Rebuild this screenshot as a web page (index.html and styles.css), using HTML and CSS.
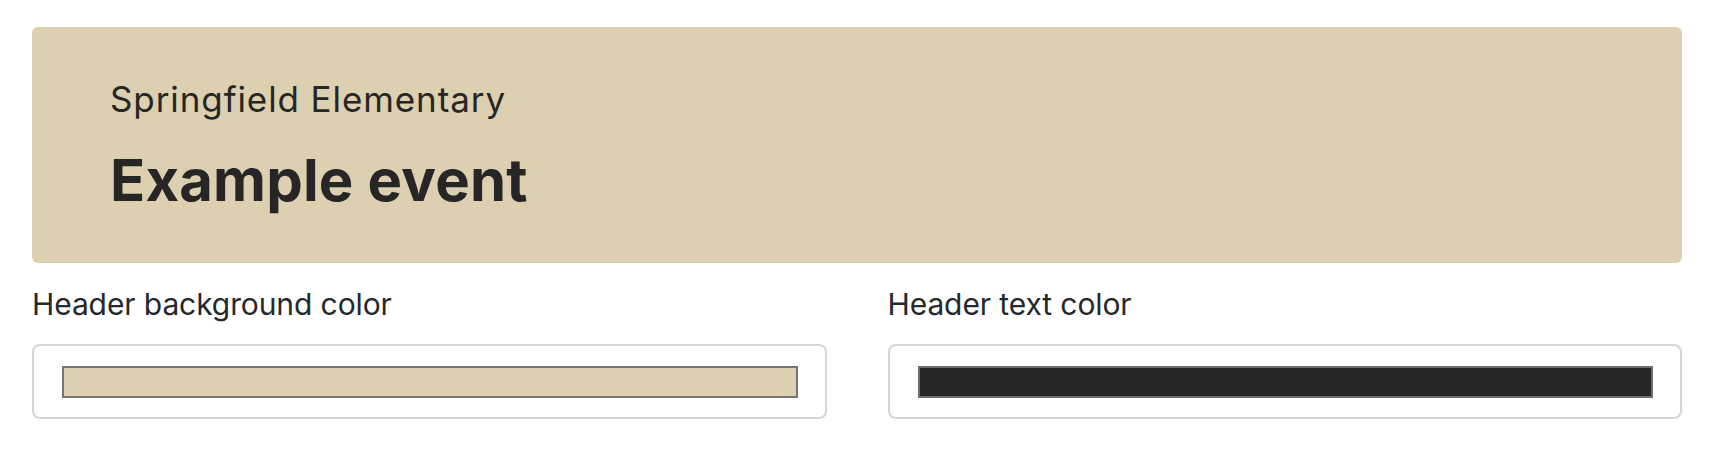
FILE: index.html
```html
<!DOCTYPE html>
<html lang="en">
<head>
<meta charset="utf-8">
<title>Event header</title>
<link rel="stylesheet" href="styles.css">
</head>
<body>
  <div class="banner">
    <div class="school">Springfield Elementary</div>
    <h1 class="title">Example event</h1>
  </div>
  <div class="fields">
    <div class="field">
      <label class="label">Header background color</label>
      <div class="picker"><div class="swatch swatch-bg"></div></div>
    </div>
    <div class="field">
      <label class="label">Header text color</label>
      <div class="picker"><div class="swatch swatch-text"></div></div>
    </div>
  </div>
</body>
</html>
```
FILE: styles.css
```css
html, body {
  background: #ffffff;
}
body {
  margin: 0;
  padding: 27px 30px 30px 32px;
  font-family: Inter, "Noto Sans", sans-serif;
  color: #262626;
}
.banner {
  box-sizing: border-box;
  height: 236px;
  background: #ddd0b0;
  border-radius: 6px;
  padding: 51px 0 0 78px;
  color: #262626;
}
.school {
  font-size: 35px;
  line-height: 42px;
  font-weight: 400;
  letter-spacing: 0.9px;
}
.title {
  margin: 25px 0 0;
  font-size: 58px;
  line-height: 70px;
  font-weight: 700;
  letter-spacing: 0.2px;
}
.fields {
  display: grid;
  grid-template-columns: 1fr 1fr;
  column-gap: 61px;
  margin-top: 23px;
}
.field {
  display: flex;
  flex-direction: column;
}
.label {
  font-size: 30px;
  line-height: 36px;
  letter-spacing: -0.1px;
  color: #25282c;
}
.picker {
  margin-top: 22px;
  box-sizing: border-box;
  height: 75px;
  border: 2px solid #d3d7dc;
  border-radius: 8px;
  padding: 20px 27px 19px 28px;
  background: #fff;
}
.swatch {
  box-sizing: border-box;
  height: 32px;
  border: 2px solid #757575;
}
.swatch-bg {
  background: #ddd0b0;
}
.swatch-text {
  background: #262626;
  border-color: #6e6e6e;
}
```
